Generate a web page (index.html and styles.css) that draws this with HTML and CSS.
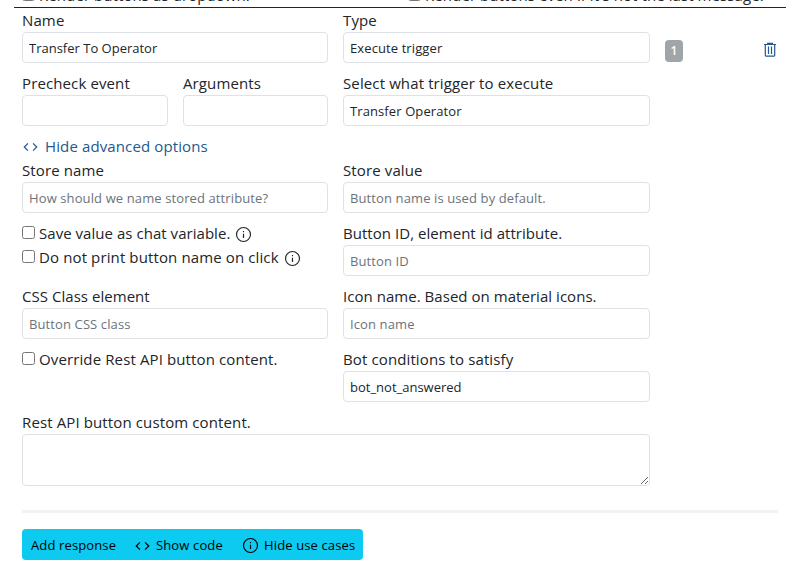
FILE: index.html
```html
<!DOCTYPE html>
<html lang="en">
<head>
<meta charset="utf-8">
<title>Bot response editor</title>
<link rel="stylesheet" href="styles.css">
</head>
<body>
<svg class="defs" aria-hidden="true">
  <symbol id="info" viewBox="0 0 17 17"><circle cx="8.5" cy="8.5" r="7" fill="none" stroke="currentColor" stroke-width="1.15"/><path d="M8.5 7.7V12M8.5 5V6.3" fill="none" stroke="currentColor" stroke-width="1.2"/></symbol>
  <symbol id="code" viewBox="0 0 17 17"><path d="M5.9 5.4L2.3 9L5.9 12.6M11.1 5.4L14.7 9L11.1 12.6" fill="none" stroke="currentColor" stroke-width="1.25"/></symbol>
</svg>
<div class="render-options">
  <label class="check"><input type="checkbox"><span>Render buttons as dropdown.</span></label>
  <label class="check"><input type="checkbox"><span>Render buttons even if it's not the last message.</span></label>
</div>
<main class="editor">
  <div class="response">
    <div class="fields">
      <div class="field"><label>Name</label><input class="control" value="Transfer To Operator"></div>
      <div class="field"><label>Type</label><div class="control select">Execute trigger</div></div>
      <div class="pair">
        <div class="field"><label>Precheck event</label><input class="control"></div>
        <div class="field"><label>Arguments</label><input class="control"></div>
      </div>
      <div class="field"><label>Select what trigger to execute</label><div class="control select">Transfer Operator</div></div>
      <a class="advanced"><svg class="icon"><use href="#code"/></svg><span>Hide advanced options</span></a>
      <div class="field"><label>Store name</label><input class="control" placeholder="How should we name stored attribute?"></div>
      <div class="field"><label>Store value</label><input class="control" placeholder="Button name is used by default."></div>
      <div class="checks">
        <label class="check tight"><input type="checkbox"><span>Save value as chat variable.</span><svg class="icon info"><use href="#info"/></svg></label>
        <label class="check"><input type="checkbox"><span>Do not print button name on click</span><svg class="icon info"><use href="#info"/></svg></label>
      </div>
      <div class="field"><label class="tight">Button ID, element id attribute.</label><input class="control" placeholder="Button ID"></div>
      <div class="field"><label class="tight">CSS Class element</label><input class="control" placeholder="Button CSS class"></div>
      <div class="field"><label class="tight">Icon name. Based on material icons.</label><input class="control" placeholder="Icon name"></div>
      <div class="checks">
        <label class="check"><input type="checkbox"><span>Override Rest API button content.</span></label>
      </div>
      <div class="field"><label>Bot conditions to satisfy</label><input class="control" value="bot_not_answered"></div>
      <div class="field wide"><label>Rest API button custom content.</label><textarea class="control area"></textarea></div>
    </div>
    <div class="side">
      <span class="badge">1</span>
      <svg class="trash" viewBox="0 0 14 16"><path d="M1 2.5H13M4.6 2V1.3H9.4V2M2.3 3V13.2Q2.3 14.2 3.3 14.2H10.7Q11.7 14.2 11.7 13.2V3M5.5 4.6V12M8.5 4.6V12" fill="none" stroke="currentColor" stroke-width="1.2"/></svg>
    </div>
  </div>
  <hr>
  <div class="buttons">
    <button class="add">Add response</button>
    <button class="show"><svg class="icon"><use href="#code"/></svg><span>Show code</span></button>
    <button class="hide"><svg class="icon"><use href="#info"/></svg><span>Hide use cases</span></button>
  </div>
</main>
</body>
</html>
```
FILE: styles.css
```css
* { box-sizing: border-box; }
body {
  margin: 0;
  height: 565px;
  overflow: hidden;
  background: #fff;
  color: #212529;
  font: 15px/24px "Open Sans", sans-serif;
  letter-spacing: 0.12px;
}
.defs { display: none; }
.tight { letter-spacing: 0.04px; }
.render-options {
  display: flex;
  align-items: flex-end;
  height: 8px;
  margin: 0 14px;
  padding-left: 8px;
  overflow: hidden;
  letter-spacing: 0.08px;
  border-bottom: 1px solid #212529;
}
.render-options .check { width: 386px; flex: none; }
.editor { padding: 0 22px; }
.response { display: flex; gap: 15px; }
.fields {
  display: grid;
  grid-template-columns: 306px 307px;
  column-gap: 15px;
  row-gap: 8px;
  width: 628px;
}
.field { display: flex; flex-direction: column; min-width: 0; }
.field label { height: 24px; white-space: nowrap; }
.pair { display: grid; grid-template-columns: 146px 145px; gap: 15px; }
.wide { grid-column: 1 / -1; }
.control {
  width: 100%;
  height: 31px;
  margin: 0;
  padding: 4px 6px;
  border: 1px solid #dee2e6;
  border-radius: 4px;
  background: #fff;
  color: #212529;
  font: 13px/21px "Open Sans", sans-serif;
  letter-spacing: 0;
}
.select { padding-top: 5px; letter-spacing: 0.1px; }
.control::placeholder { color: #6c737a; opacity: 1; letter-spacing: 0.11px; }
.area { display: block; height: 52px; resize: vertical; }
.advanced {
  grid-column: 1 / -1;
  display: flex;
  align-items: center;
  gap: 6px;
  height: 24px;
  margin-bottom: -8px;
  color: #23598f;
}
.icon { width: 17px; height: 17px; flex: none; }
.info { margin: 3px 0 0 5px; }
.check { display: flex; align-items: center; height: 24px; white-space: nowrap; }
.check input {
  width: 13px;
  height: 13px;
  margin: 0 4px 2px 0;
}
.side {
  display: flex;
  justify-content: space-between;
  align-items: flex-start;
  flex: 1;
  padding-top: 32px;
}
.badge {
  width: 18px;
  height: 22px;
  border-radius: 4px;
  background: #a0a5aa;
  color: #fff;
  font: 600 12px/21px "Open Sans", sans-serif;
  text-align: center;
}
.trash { width: 14px; height: 16px; margin: 2px 1px 0 0; color: #23598f; }
hr { height: 3px; margin: 24px 0 16px; border: 0; background: #f2f2f2; }
.buttons {
  display: flex;
  width: 341px;
  height: 31px;
  overflow: hidden;
  border-radius: 4px;
  background: #0dcaf0;
}
.buttons button {
  display: flex;
  align-items: center;
  gap: 5px;
  padding: 2px 0 0 9px;
  border: 0;
  background: none;
  color: #000;
  font: 13px/21px "Open Sans", sans-serif;
  letter-spacing: 0.13px;
  white-space: nowrap;
}
.add { width: 103px; }
.show { width: 108px; }
.hide { width: 130px; }
```
